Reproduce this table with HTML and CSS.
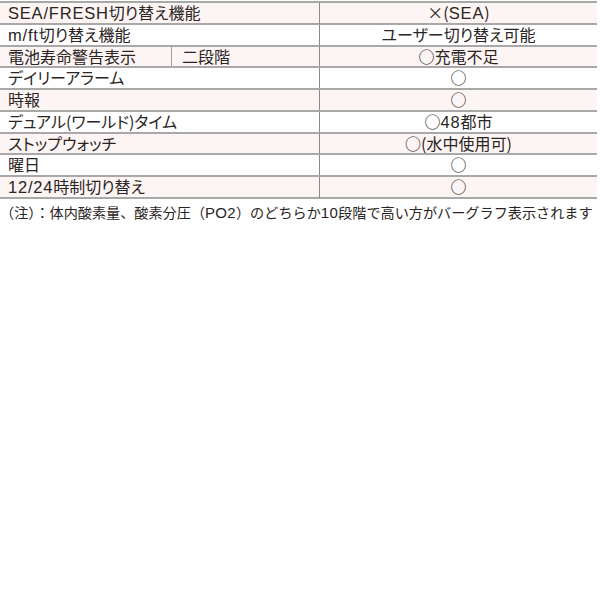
FILE: index.html
```html
<!DOCTYPE html>
<html lang="ja">
<head>
<meta charset="utf-8">
<link rel="stylesheet" href="styles.css">
</head>
<body>
<div class="spec">
  <div class="row pink">
    <div class="label"><span class="lat">SEA/FRESH</span>切り替え機能</div>
    <div class="value">×(<span class="lat">SEA</span>)</div>
  </div>
  <div class="row">
    <div class="label"><span class="lat">m/ft</span>切り替え機能</div>
    <div class="value">ユーザー切り替え可能</div>
  </div>
  <div class="row pink">
    <div class="label split"><span class="sub1">電池寿命警告表示</span><span class="sub2">二段階</span></div>
    <div class="value">○充電不足</div>
  </div>
  <div class="row">
    <div class="label">デイリーアラーム</div>
    <div class="value">○</div>
  </div>
  <div class="row pink">
    <div class="label">時報</div>
    <div class="value">○</div>
  </div>
  <div class="row">
    <div class="label">デュアル(ワールド)タイム</div>
    <div class="value">○<span class="lat">48</span>都市</div>
  </div>
  <div class="row pink">
    <div class="label">ストップウォッチ</div>
    <div class="value">○(水中使用可)</div>
  </div>
  <div class="row">
    <div class="label">曜日</div>
    <div class="value">○</div>
  </div>
  <div class="row pink">
    <div class="label"><span class="lat">12/24</span>時制切り替え</div>
    <div class="value">○</div>
  </div>
</div>
<p class="note">（注）：体内酸素量、酸素分圧（<span class="lat">PO2</span>）のどちらか<span class="lat">10</span>段階で高い方がバーグラフ表示されます</p>
</body>
</html>
```

FILE: styles.css
```css
html, body {
  margin: 0;
  padding: 0;
  background: #ffffff;
}
body {
  font-family: "Noto Sans CJK JP", "Noto Sans", sans-serif;
  color: #2a2422;
}
.spec {
  width: 597px;
  margin-top: 1px;
  border-top: 2px solid #a8a8a8;
}
.row {
  display: grid;
  grid-template-columns: 320px 1fr;
  height: 19.78px;
  border-bottom: 2px solid #a8a8a8;
  font-size: 16px;
  line-height: 19.78px;
  font-feature-settings: "palt";
  background: #ffffff;
}
.row.pink {
  background: #fdf4f4;
}
.label {
  padding-left: 8px;
  border-right: 1px solid #8a8a8a;
  white-space: nowrap;
}
.label.split {
  padding-left: 0;
  display: grid;
  grid-template-columns: 172px 1fr;
}
.sub1 {
  padding-left: 8px;
  border-right: 1px solid #a0a0a0;
}
.sub2 {
  padding-left: 10px;
}
.value {
  text-align: center;
  white-space: nowrap;
}
.lat {
  font-family: "Liberation Sans", Arial, sans-serif;
  font-size: 16.5px;
  letter-spacing: 0.8px;
}
.note {
  margin: 2px 0 0 0;
  font-size: 14.15px;
  line-height: 22px;
  white-space: nowrap;
}
.note .lat {
  font-size: 15px;
  letter-spacing: 0.3px;
}
```
